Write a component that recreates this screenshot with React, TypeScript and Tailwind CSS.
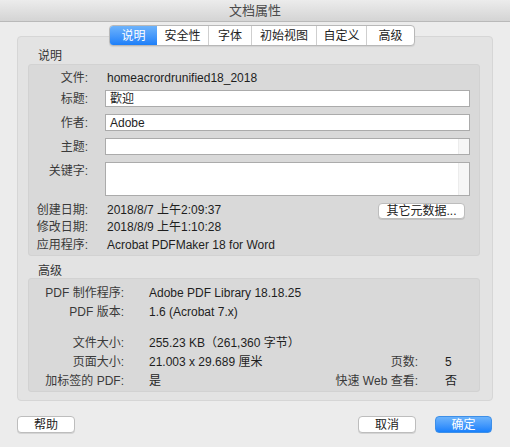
import React from 'react';

const TABS = ['说明', '安全性', '字体', '初始视图', '自定义', '高级'];
const TAB_WIDTHS = ['w-[47px]', 'w-[51px]', 'w-[43px]', 'w-[65px]', 'w-[50px]', 'w-[48px]'];

function Label({ children, w }: { children: React.ReactNode; w: string }) {
  return <div className={`${w} shrink-0 text-right text-[#3a3a3a]`}>{children}</div>;
}

function Field({ tall, track }: { tall?: boolean; track?: boolean }) {
  return (
    <div className={`flex-1 flex bg-white border border-[#ababab] ${tall ? 'h-[34px]' : 'h-[17px]'}`}>
      <div className="flex-1" />
      {track && <div className="w-[11px] bg-[#f6f6f6] border-l border-[#ececec]" />}
    </div>
  );
}

export default function App() {
  return (
    <div
      className="w-[510px] h-[447px] bg-[#ececec] flex flex-col text-[12px] text-[#1e1e1e] overflow-hidden"
      style={{ fontFamily: '"Liberation Sans", "Noto Sans CJK SC", sans-serif' }}
    >
      {/* title bar */}
      <div className="h-[22px] shrink-0 bg-gradient-to-b from-[#ececec] to-[#d4d4d4] border-b border-[#b9b9b9] flex items-center justify-center text-[13px] text-[#4a4a4a]">
        文档属性
      </div>

      <div className="px-[17px] pt-[3px] flex flex-col">
        {/* tabs */}
        <div className="relative z-10 flex justify-center pl-[14px]">
          <div className="flex h-[21px] rounded-[4px] border border-[#b8b8b8] bg-white shadow-[0_1px_1px_rgba(0,0,0,0.08)] overflow-hidden">
            {TABS.map((t, i) => (
              <div
                key={t}
                className={`${TAB_WIDTHS[i]} flex items-center justify-center ${
                  i === 0
                    ? 'bg-gradient-to-b from-[#6db3fb] to-[#1b7ff9] text-white'
                    : 'text-[#222]'
                } ${i > 1 ? 'border-l border-[#cfcfcf]' : ''}`}
              >
                {t}
              </div>
            ))}
          </div>
        </div>

        {/* panel */}
        <div className="-mt-[10px] h-[365px] rounded-[4px] border border-[#d6d6d6] bg-[#e3e3e3] pt-[12px] pl-[10px] pr-[12px] flex flex-col">
          <div className="h-[15px] leading-[15px] pl-[10px] text-[#333]">说明</div>
          <div className="h-[192px] rounded-[3px] border border-[#d2d2d2] bg-[#d9d9d9] pt-[5px] pr-[9px] flex flex-col">
            <div className="h-[16px] flex items-center">
              <Label w="w-[59px]">文件:</Label>
              <div className="ml-[19px]">homeacrordrunified18_2018</div>
            </div>
            <div className="mt-[4px] flex items-start">
              <Label w="w-[59px]"><span className="leading-[17px]">标题:</span></Label>
              <div className="ml-[17px] flex-1 relative h-[17px] bg-white border border-[#ababab] flex items-center pl-[4px]">歡迎</div>
            </div>
            <div className="mt-[6px] flex items-start">
              <Label w="w-[59px]"><span className="leading-[17px]">作者:</span></Label>
              <div className="ml-[17px] flex-1 h-[17px] bg-white border border-[#ababab] flex items-center pl-[4px]">Adobe</div>
            </div>
            <div className="mt-[6px] flex items-start">
              <Label w="w-[59px]"><span className="leading-[17px]">主题:</span></Label>
              <div className="ml-[17px] flex-1 flex"><Field track /></div>
            </div>
            <div className="mt-[6px] flex items-start">
              <Label w="w-[59px]"><span className="leading-[16px]">关键字:</span></Label>
              <div className="ml-[17px] flex-1 flex"><Field tall track /></div>
            </div>
            <div className="mt-[5px] h-[17px] flex items-center">
              <Label w="w-[59px]">创建日期:</Label>
              <div className="ml-[19px] flex-1">2018/8/7 上午2:09:37</div>
              <button className="mt-[2px] mr-[5px] w-[87px] h-[16px] rounded-[4px] bg-white border border-[#bdbdbd] shadow-[0_1px_0_rgba(0,0,0,0.1)] text-[12px] leading-none text-[#222]">
                其它元数据...
              </button>
            </div>
            <div className="h-[18px] flex items-center">
              <Label w="w-[59px]">修改日期:</Label>
              <div className="ml-[19px]">2018/8/9 上午1:10:28</div>
            </div>
            <div className="h-[18px] flex items-center">
              <Label w="w-[59px]">应用程序:</Label>
              <div className="ml-[19px]">Acrobat PDFMaker 18 for Word</div>
            </div>
          </div>

          <div className="mt-[8px] h-[14px] leading-[14px] pl-[10px] text-[#333]">高级</div>
          <div className="h-[114px] rounded-[3px] border border-[#d2d2d2] bg-[#d9d9d9] pt-[4px] flex flex-col">
            <div className="h-[19px] flex items-center">
              <Label w="w-[95px]">PDF 制作程序:</Label>
              <div className="ml-[25px]">Adobe PDF Library 18.18.25</div>
            </div>
            <div className="h-[19px] flex items-center">
              <Label w="w-[95px]">PDF 版本:</Label>
              <div className="ml-[25px]">1.6 (Acrobat 7.x)</div>
            </div>
            <div className="mt-[12px] h-[19px] flex items-center">
              <Label w="w-[95px]">文件大小:</Label>
              <div className="ml-[25px]">255.23 KB（261,360 字节）</div>
            </div>
            <div className="h-[19px] flex items-center">
              <Label w="w-[95px]">页面大小:</Label>
              <div className="ml-[25px] flex-1">21.003 x 29.689 厘米</div>
              <div className="w-[130px] text-right text-[#3a3a3a]">页数:</div>
              <div className="ml-[27px] w-[34px]">5</div>
            </div>
            <div className="h-[19px] flex items-center">
              <Label w="w-[95px]">加标签的 PDF:</Label>
              <div className="ml-[25px] flex-1">是</div>
              <div className="w-[130px] text-right text-[#3a3a3a]">快速 Web 查看:</div>
              <div className="ml-[27px] w-[34px]">否</div>
            </div>
          </div>
        </div>

        {/* footer buttons */}
        <div className="mt-[15px] flex items-center">
          <button className="w-[58px] h-[17px] rounded-[4px] bg-white border border-[#bdbdbd] shadow-[0_1px_0_rgba(0,0,0,0.1)] text-[12px] leading-none text-[#222]">
            帮助
          </button>
          <div className="flex-1" />
          <button className="w-[58px] h-[17px] rounded-[4px] bg-white border border-[#bdbdbd] shadow-[0_1px_0_rgba(0,0,0,0.1)] text-[12px] leading-none text-[#222]">
            取消
          </button>
          <button className="ml-[19px] mr-[1px] w-[57px] h-[17px] rounded-[4px] bg-gradient-to-b from-[#6cb3fb] to-[#1680fb] border border-[#3d8fe8] text-[12px] leading-none text-white">
            确定
          </button>
        </div>
      </div>
    </div>
  );
}
